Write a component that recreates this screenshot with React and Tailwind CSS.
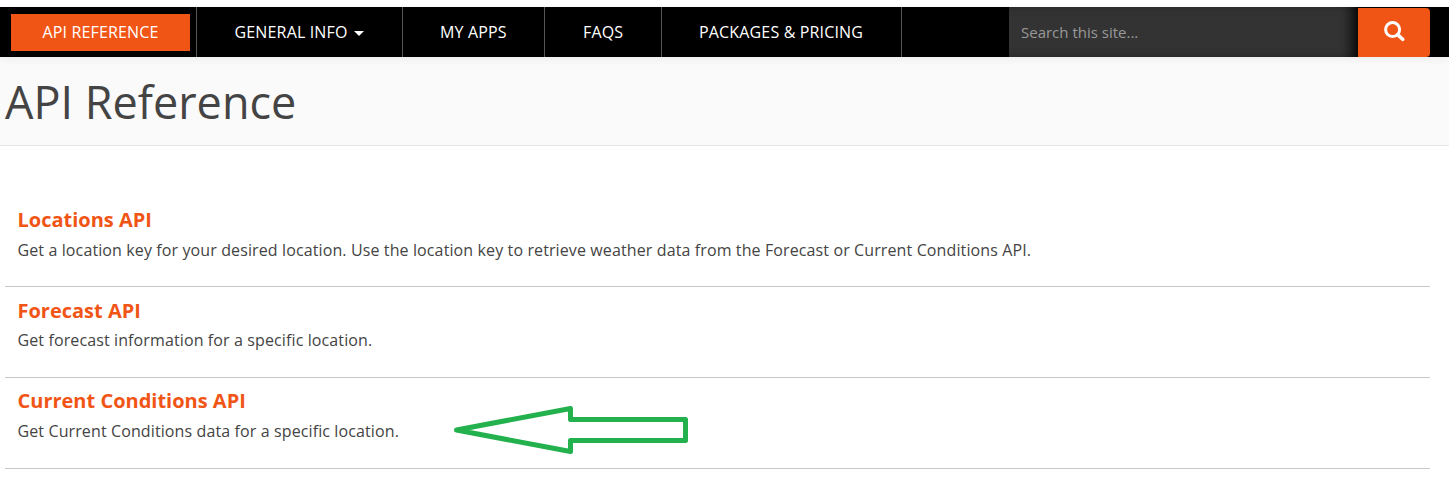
import React from "react";

const entries = [
  {
    title: "Locations API",
    text: "Get a location key for your desired location. Use the location key to retrieve weather data from the Forecast or Current Conditions API.",
    top: "pt-[10px]",
    gap: "pt-[2px]",
  },
  {
    title: "Forecast API",
    text: "Get forecast information for a specific location.",
    top: "pt-[10px]",
    gap: "pt-[1px]",
  },
  {
    title: "Current Conditions API",
    text: "Get Current Conditions data for a specific location.",
    top: "pt-[9px]",
    gap: "pt-[2px]",
  },
];

function NavItem({ className, children }) {
  return (
    <a className={`flex h-full shrink-0 items-center border-r border-[#555] ${className}`}>
      {children}
    </a>
  );
}

function NavBar() {
  return (
    <nav className="relative flex h-[50px] bg-black text-[16px] leading-[22px] tracking-[0.16px] whitespace-nowrap text-white shadow-[0_2px_8px_rgba(40,0,20,0.06)]">
      <NavItem className="w-[197px] pl-[11px]">
        <span className="flex h-[37px] w-[179px] items-center justify-center bg-[#f15516]">
          API REFERENCE
        </span>
      </NavItem>
      <NavItem className="w-[206px] pl-[37.5px]">
        GENERAL INFO
        <svg className="mt-[3px] ml-[6.5px] h-[5px] w-[10px]" viewBox="0 0 10 5">
          <path d="M0 0H10L5 5Z" fill="#fff" />
        </svg>
      </NavItem>
      <NavItem className="w-[142px] pl-[37px]">MY APPS</NavItem>
      <NavItem className="w-[117px] pl-[38px]">FAQS</NavItem>
      <NavItem className="w-[240px] pl-[37px]">PACKAGES &amp; PRICING</NavItem>
      <form className="ml-[107px] flex h-full w-[421px] tracking-normal">
        <div className="flex w-[349px] items-center bg-[#333] pl-3 text-[15px] text-[#999] shadow-[inset_-12px_0_14px_-7px_#000]">
          Search this site...
        </div>
        <div className="mt-px flex h-[49px] w-[72px] justify-center rounded-r bg-[#f15516] pt-[13px]">
          <svg className="h-[21px] w-[21px]" viewBox="0 0 21 21" fill="none" stroke="#fff">
            <circle cx="8.6" cy="8.6" r="7" strokeWidth="3" />
            <path d="M13.6 13.6L18.7 18.3" strokeWidth="3.6" strokeLinecap="round" />
          </svg>
        </div>
      </form>
    </nav>
  );
}

function Arrow() {
  return (
    <svg className="absolute top-[23px] left-[448px] h-[54px] w-[236px]" viewBox="0 0 236 54">
      <path
        d="M3.5 29L117.5 7.5V18.5H232.5V39.5H117.5V50.5Z"
        fill="none"
        stroke="#22b14c"
        strokeWidth="5"
        strokeLinejoin="round"
      />
    </svg>
  );
}

export default function App() {
  return (
    <div className="h-[477px] overflow-hidden bg-white pt-[7px] font-['Open_Sans',sans-serif] text-[#444]">
      <NavBar />
      <header className="h-[89px] border-b border-[#e5e5e5] bg-[#fafafa] pt-[14px] pl-[5px]">
        <h1 className="text-[45px] leading-[61px] font-normal">API Reference</h1>
      </header>
      <main className="ml-[5px] w-[1425px] pt-[50px]">
        {entries.map((e, i) => (
          <section key={e.title} className={`relative h-[91px] border-b border-[#c8c8c8] pl-[12.5px] ${e.top}`}>
            <h2 className="text-[20px] leading-[28px] font-bold text-[#f15516]">{e.title}</h2>
            <p className={`text-[16px] leading-[28px] tracking-[0.115px] ${e.gap}`}>{e.text}</p>
            {i === 2 && <Arrow />}
          </section>
        ))}
      </main>
    </div>
  );
}
